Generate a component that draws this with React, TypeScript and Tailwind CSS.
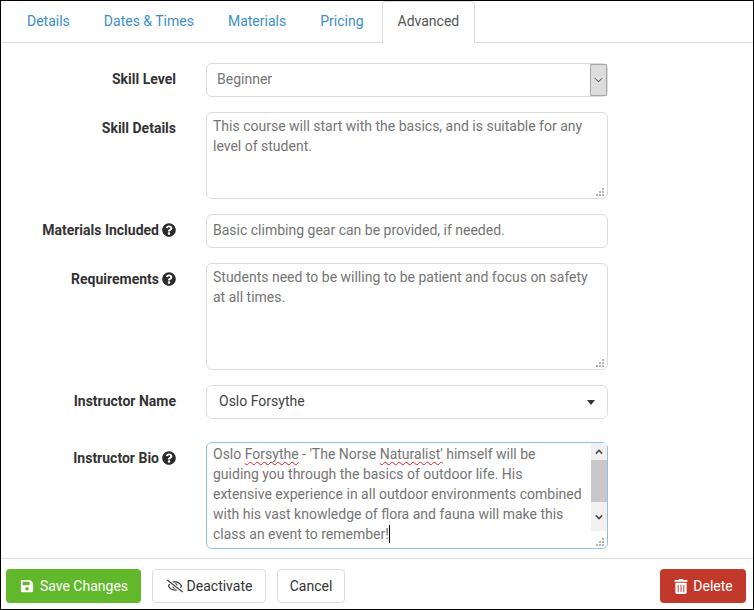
import React from 'react';
import { FaQuestionCircle, FaRegEyeSlash, FaSave, FaTrashAlt } from 'react-icons/fa';

const font = "font-['Roboto',sans-serif]";

// Tabs across the top
const tabs = ['Details', 'Dates & Times', 'Materials', 'Pricing'];

const Label = ({ text, help, className = '' }: { text: string; help?: boolean; className?: string }) => (
  <div className={`flex w-[175px] shrink-0 items-center justify-end text-[14px] font-bold leading-5 text-[#333333] ${className}`}>
    {text}
    {help && <FaQuestionCircle className="ml-[3px] h-[14px] w-[14px] shrink-0 text-[#2b2b2b]" />}
  </div>
);

const Grip = () => (
  <svg viewBox="0 1 8 8" className="absolute bottom-[2px] right-[3px] h-[8px] w-[8px]" fill="#b4b4b4">
    <rect x="6" y="1" width="2" height="2" />
    <rect x="3" y="4" width="2" height="2" />
    <rect x="6" y="4" width="2" height="2" />
    <rect x="0" y="7" width="2" height="2" />
    <rect x="3" y="7" width="2" height="2" />
    <rect x="6" y="7" width="2" height="2" />
  </svg>
);

const TextBox = ({ height, children }: { height: string; children: React.ReactNode }) => (
  <div className={`relative w-[402px] rounded-[6px] border border-[#dddddd] bg-white px-[6px] py-[3px] text-[14px] leading-5 text-[#757575] ${height}`}>
    {children}
    <Grip />
  </div>
);

const Squiggle = ({ children }: { children: React.ReactNode }) => (
  <span className="underline decoration-[#e02020] decoration-wavy decoration-1 underline-offset-2 [text-decoration-skip-ink:none]">{children}</span>
);

export default function App() {
  return (
    <div className={`flex h-[610px] w-[754px] flex-col overflow-hidden border border-black bg-white ${font}`}>
      {/* Tab navigation */}
      <nav className="flex h-[42px] shrink-0 border-b border-[#dddddd] pl-[9px] text-[14px] leading-5">
        {tabs.map((tab) => (
          <a key={tab} className="px-[17px] pt-[10px] text-[#3b8ec9]">
            {tab}
          </a>
        ))}
        <a className="ml-[1px] h-[42px] rounded-t-[4px] border border-b-0 border-[#dddddd] bg-white px-[15px] pt-[9px] text-[#555555]">
          Advanced
        </a>
      </nav>

      {/* Form rows */}
      <main className="flex-1 pt-[20px]">
        <div className="mb-[15px] flex h-[34px] gap-[30px]">
          <Label text="Skill Level" className="pb-[2px]" />
          <div className="relative flex w-[402px] items-center rounded-[6px] border border-[#dddddd] pb-[2px] pl-[10px] text-[14px] text-[#757575]">
            Beginner
            <div className="absolute bottom-0 right-0 top-0 flex w-[17px] items-center justify-center rounded-[1px] border border-[#a6a6a6] bg-[#dddddd]">
              <svg viewBox="0 0 10 6" className="h-[6px] w-[9px]" fill="none" stroke="#333333" strokeWidth="1">
                <path d="M1 1l4 4 4-4" />
              </svg>
            </div>
          </div>
        </div>

        <div className="mb-[15px] flex gap-[30px]">
          <Label text="Skill Details" className="h-[32px]" />
          <TextBox height="h-[87px]">
            This course will start with the basics, and is suitable for any level of student.
          </TextBox>
        </div>

        <div className="mb-[15px] flex h-[34px] gap-[30px]">
          <Label text="Materials Included" help className="pb-[2px]" />
          <div className="flex w-[402px] items-center rounded-[6px] border border-[#dddddd] px-[6px] pb-[2px] text-[14px] text-[#757575]">
            Basic climbing gear can be provided, if needed.
          </div>
        </div>

        <div className="mb-[15px] flex gap-[30px]">
          <Label text="Requirements" help className="h-[32px]" />
          <TextBox height="h-[107px]">
            Students need to be willing to be patient and focus on safety at all times.
          </TextBox>
        </div>

        <div className="mb-[23px] flex h-[34px] gap-[30px]">
          <Label text="Instructor Name" className="pb-[2px]" />
          <div className="relative flex w-[402px] items-center rounded-[6px] border border-[#dddddd] pb-[2px] pl-[12px] text-[14px] text-[#444444]">
            Oslo Forsythe
            <span className="absolute right-[12px] top-[14px] h-0 w-0 border-x-[4px] border-t-[5px] border-x-transparent border-t-[#333333]" />
          </div>
        </div>

        <div className="flex gap-[30px]">
          <Label text="Instructor Bio" help className="h-[32px]" />
          <div className="relative h-[107px] w-[402px] rounded-[6px] border border-[#8fc1e8] bg-white py-px pl-[6px] pr-[24px] text-[14px] leading-5 text-[#757575]">
            Oslo <Squiggle>Forsythe</Squiggle> - 'The Norse <Squiggle>Naturalist'</Squiggle> himself will be guiding you
            through the basics of outdoor life. His extensive experience in all outdoor environments combined with his
            vast knowledge of flora and fauna will make this class an event to remember!
            <span className="inline-block h-[18px] w-px bg-black align-[-4px]" />
            {/* Scrollbar */}
            <div className="absolute right-0 top-0 flex h-[88px] w-[16px] flex-col bg-[#f1f1f1]">
              <div className="flex h-[17px] items-center justify-center">
                <svg viewBox="0 0 10 6" className="h-[6px] w-[8px]" fill="none" stroke="#505050" strokeWidth="2">
                  <path d="M1 5l4-4 4 4" />
                </svg>
              </div>
              <div className="h-[42px] bg-[#c8c8c8]" />
              <div className="flex flex-1 items-center justify-center">
                <svg viewBox="0 0 10 6" className="h-[6px] w-[8px]" fill="none" stroke="#505050" strokeWidth="2">
                  <path d="M1 1l4 4 4-4" />
                </svg>
              </div>
            </div>
            <Grip />
          </div>
        </div>
      </main>

      {/* Footer actions */}
      <footer className="flex h-[51px] shrink-0 items-start border-t border-[#dddddd] pl-[5px] pr-[7px] pt-[10px] text-[14px]">
        <button className="flex h-[34px] w-[135px] items-center justify-center gap-[6px] rounded-[4px] bg-[#60b82a] pl-[1px] text-white">
          <FaSave className="h-[14px] w-[14px]" />
          Save Changes
        </button>
        <button className="ml-[11px] flex h-[34px] w-[114px] items-center justify-center gap-[4px] rounded-[4px] border border-[#dddddd] bg-white pl-[1px] text-[#333333]">
          <FaRegEyeSlash className="h-[14px] w-[16px]" />
          Deactivate
        </button>
        <button className="ml-[11px] h-[34px] w-[68px] rounded-[4px] border border-[#dddddd] bg-white text-[#333333]">
          Cancel
        </button>
        <button className="ml-auto flex h-[34px] w-[86px] items-center justify-center gap-[5px] rounded-[4px] bg-[#c0392b] pl-[1px] text-white">
          <FaTrashAlt className="h-[15px] w-[14px]" />
          Delete
        </button>
      </footer>
    </div>
  );
}
